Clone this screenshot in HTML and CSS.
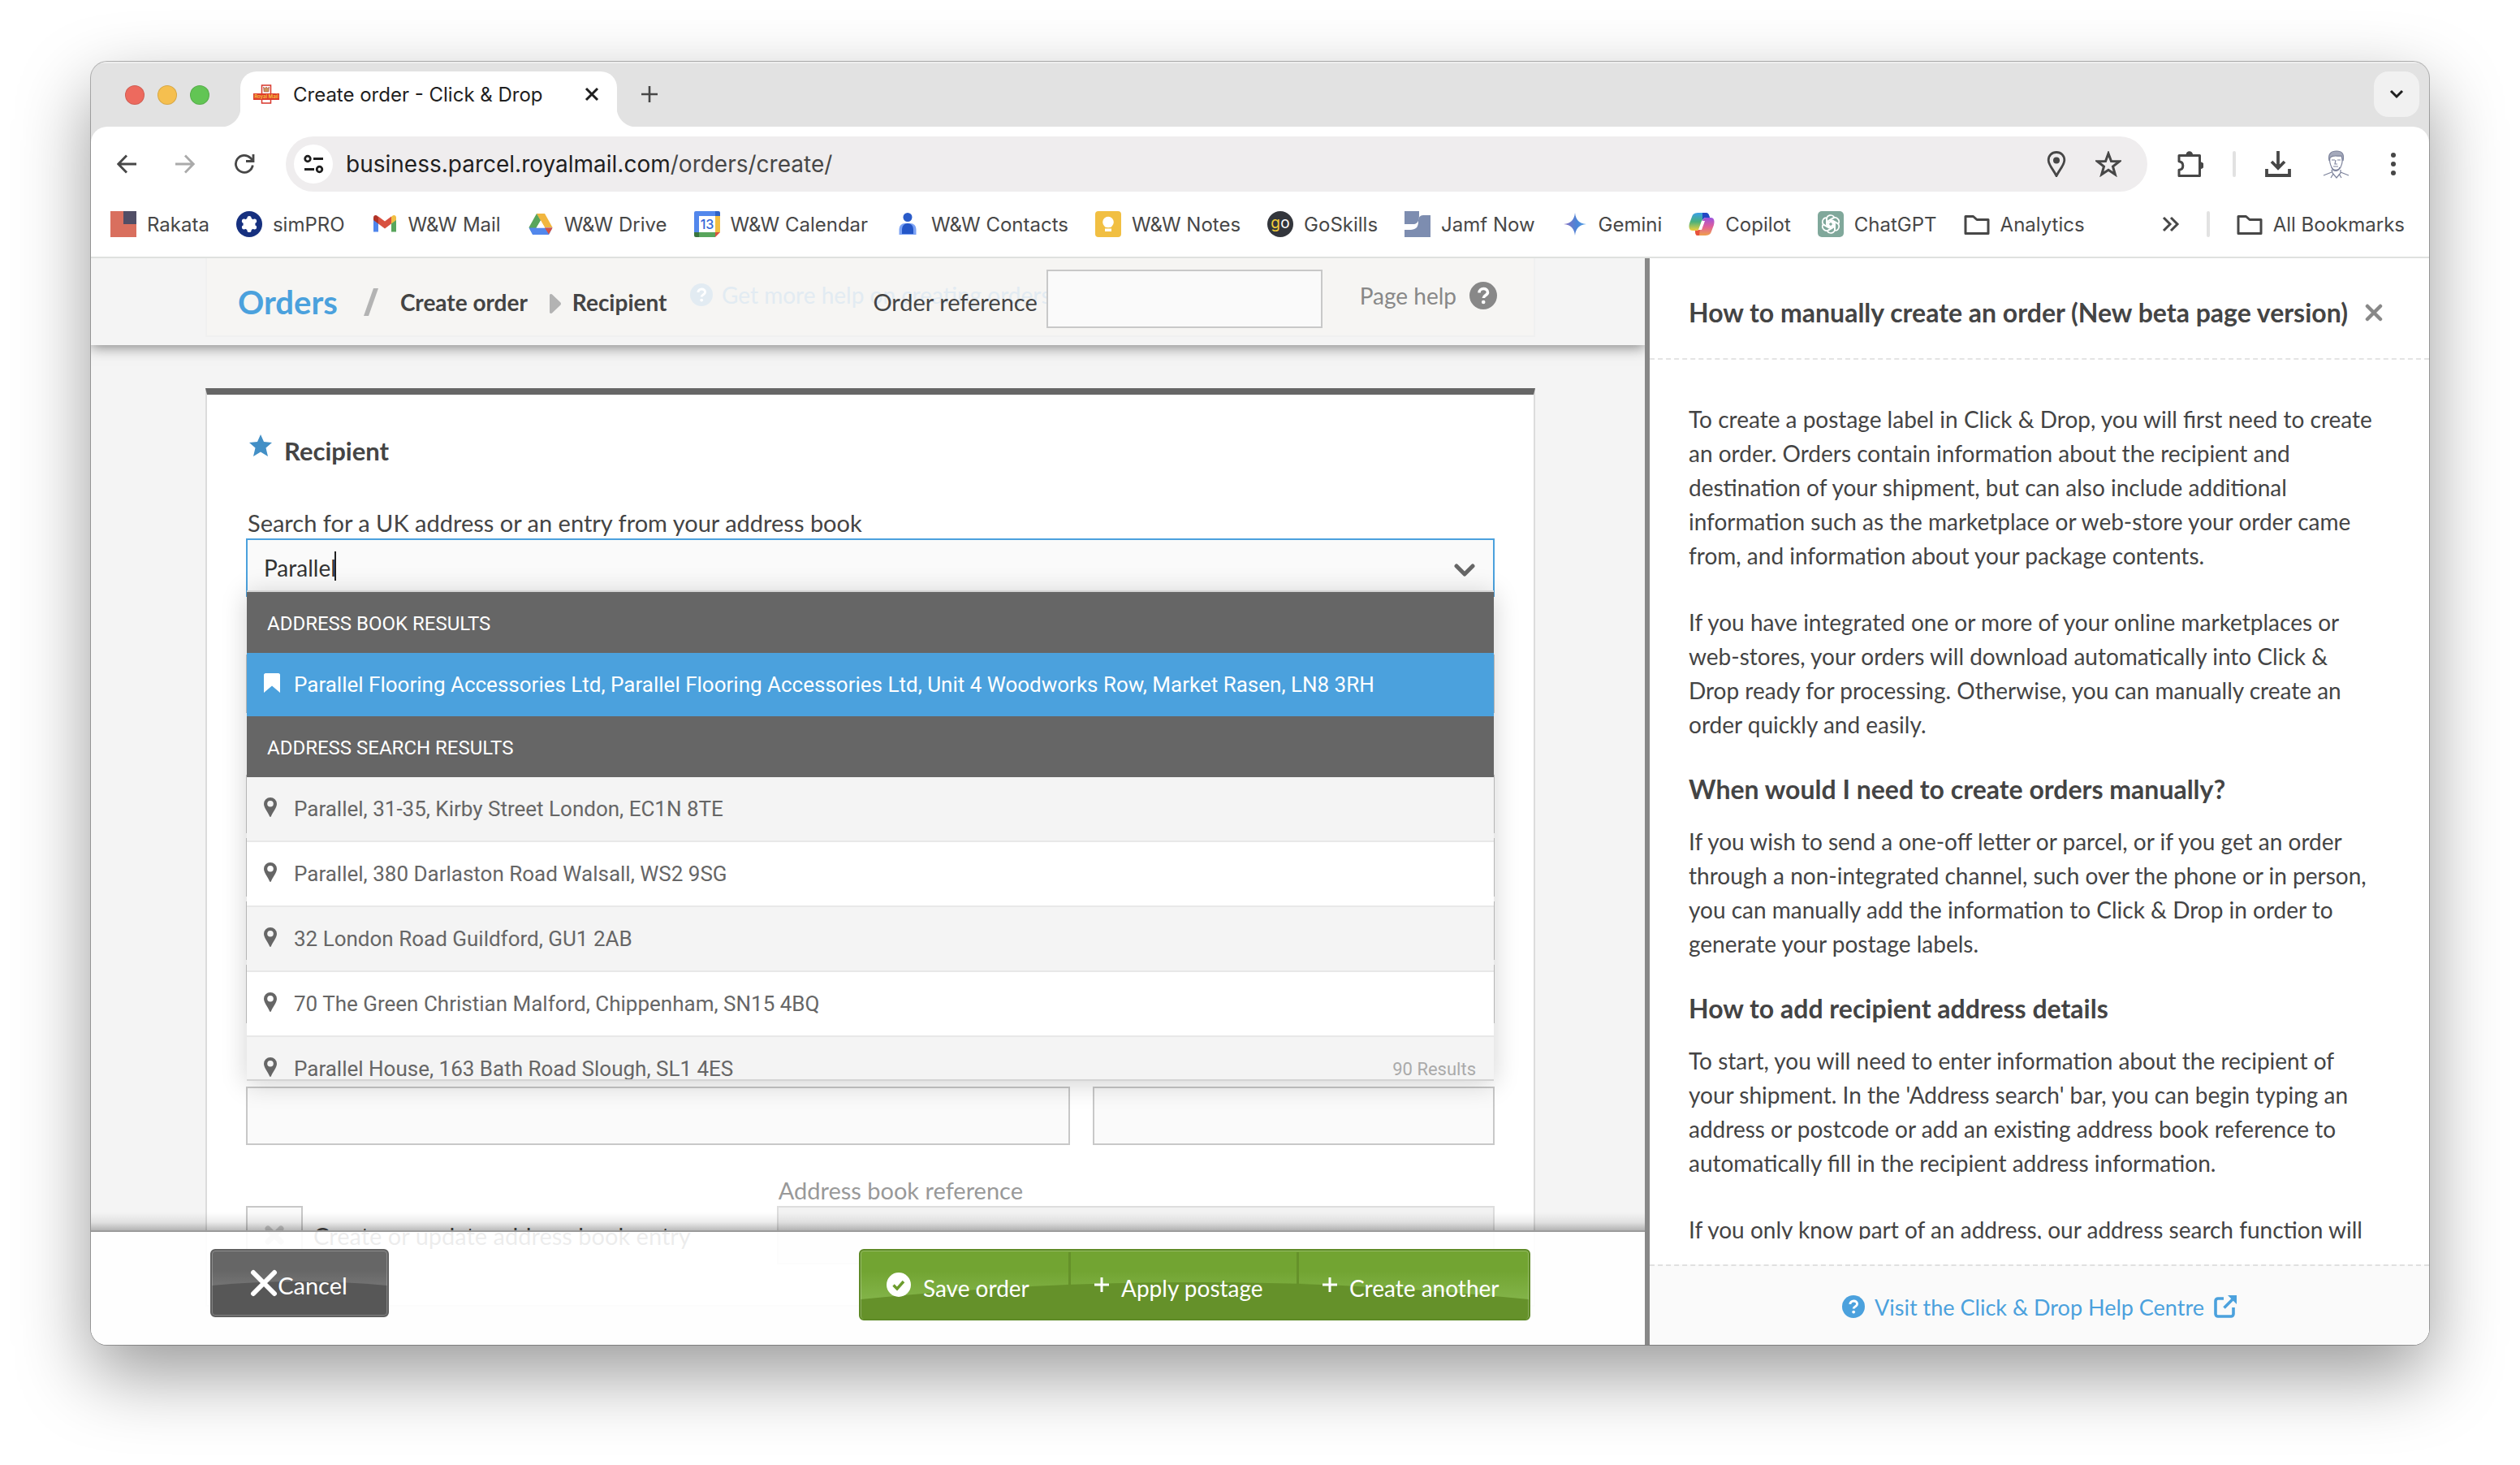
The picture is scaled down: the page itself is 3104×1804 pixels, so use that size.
FILE: index.html
```html
<!DOCTYPE html>
<html lang="en">
<head>
<meta charset="utf-8">
<meta name="viewport" content="width=device-width, initial-scale=1">
<title>Create order - Click &amp; Drop</title>
<link rel="stylesheet" href="styles.css">
</head>
<body>
<svg class="defs" aria-hidden="true">
  <defs>
    <symbol id="pin" viewBox="0 0 16 24" preserveAspectRatio="xMinYMid meet"><path fill-rule="evenodd" d="M8 0a8 8 0 0 1 8 8c0 4.500-5.500 11-7.200 15.400a.9.9 0 0 1-1.600 0C5.500 19 0 12.500 0 8a8 8 0 0 1 8-8zm0 4a3.800 3.800 0 1 0 0 7.600A3.800 3.800 0 0 0 8 4z"/></symbol>
    <symbol id="folder" viewBox="0 0 32 32"><path d="M2 6.500h9.500l4.500 4h14v17H2z" fill="none" stroke="#474747" stroke-width="3" stroke-linejoin="round"/></symbol>
    <symbol id="question" viewBox="0 0 34 34"><circle cx="17" cy="17" r="17"/><path d="M12 13.500c0-6.500 10.500-6.500 10.500-.5 0 3.800-5.200 3.800-5.200 7" fill="none" stroke="#fff" stroke-width="3.600"/><circle cx="17.200" cy="25" r="2.300" fill="#fff"/></symbol>
  </defs>
</svg>
<div class="window">
  <header class="tabstrip">
    <div class="lights"><span class="light red"></span><span class="light amber"></span><span class="light green"></span></div>
    <div class="tab">
      <svg class="i32" viewBox="0 0 32 32"><path d="M10.500 5h11v22h-11z" fill="#fff" stroke="#d8362b" stroke-width="1.500"/><path d="M12.500 7l2 2 1.500-2 1.500 2 2-2-.7 6h-5.600z" fill="#c9975c" stroke="#a8433a" stroke-width=".6"/><path d="M0 15h32v8H0z" fill="#dd3b2c"/><text x="16" y="21" text-anchor="middle" font-size="6" font-weight="600" fill="#f7c33f">Royal Mail</text></svg>
      <span class="tab-title">Create order - Click &amp; Drop</span>
      <button class="bare" aria-label="Close tab"><svg class="i18" viewBox="0 0 18 18"><path d="M2 2l14 14M16 2L2 16" stroke="#1f1f1f" stroke-width="3"/></svg></button>
    </div>
    <button class="bare newtab" aria-label="New tab"><svg class="i22" viewBox="0 0 22 22"><path d="M11 1v20M1 11h20" stroke="#474747" stroke-width="2.600"/></svg></button>
    <button class="tabmenu" aria-label="Search tabs"><svg class="i18" viewBox="0 0 18 18"><path d="M2 5l7 7 7-7" fill="none" stroke="#1f1f1f" stroke-width="3"/></svg></button>
  </header>

  <div class="chrome">
    <div class="urlrow">
      <div class="navs">
        <button class="bare" aria-label="Back"><svg class="i24" viewBox="0 0 24 24"><path d="M24 12H2M12 1.500L1.800 12 12 22.500" fill="none" stroke="#474747" stroke-width="2.800"/></svg></button>
        <button class="bare" aria-label="Forward"><svg class="i24" viewBox="0 0 24 24"><path d="M0 12h22M12 1.500L22.200 12 12 22.500" fill="none" stroke="#aaa" stroke-width="2.800"/></svg></button>
        <button class="bare" aria-label="Reload"><svg class="i26" viewBox="0 0 26 26"><path d="M23.300 14.500A10.500 10.500 0 1 1 20.500 5.500l3 3" fill="none" stroke="#474747" stroke-width="2.800"/><path d="M24 1v8.500h-9" fill="none" stroke="#474747" stroke-width="2.800"/></svg></button>
      </div>
      <div class="urlbar">
        <span class="tune"><svg class="i26" viewBox="0 0 26 26"><g fill="none" stroke="#1f1f1f" stroke-width="2.800"><circle cx="6" cy="6.500" r="3.300"/><path d="M13 6.500h12M2 19.500h12"/><circle cx="20.500" cy="19.500" r="3.300"/></g></svg></span>
        <span class="url">business.parcel.royalmail.com<span class="path">/orders/create/</span></span>
        <button class="bare" aria-label="Location"><svg class="i32" viewBox="0 0 32 32"><path d="M16 1.500c5.800 0 9.800 4.300 9.800 9.700C25.800 17 20 22.500 16 30.500 12 22.500 6.200 17 6.200 11.200c0-5.400 4-9.700 9.800-9.700z" fill="none" stroke="#474747" stroke-width="2.800"/><circle cx="16" cy="11.500" r="4" fill="#474747"/></svg></button>
        <button class="bare" aria-label="Bookmark this tab"><svg class="i32" viewBox="0 0 32 32"><path d="M16 3l3.500 9.500 10 .3-8 6.200 2.800 9.800L16 23.200l-8.300 5.600 2.800-9.800-8-6.200 10-.3z" fill="none" stroke="#474747" stroke-width="3"/></svg></button>
      </div>
      <div class="actions">
        <button class="bare" aria-label="Extensions"><svg class="i32" viewBox="0 0 32 32"><path d="M2 5.500h25.500v25H2v-7.200c2.800-.3 4.800-2.300 4.800-5.300S4.800 13 2 12.700z" fill="none" stroke="#474747" stroke-width="3" stroke-linejoin="round"/><path d="M10.500 4.500a4.300 4.300 0 0 1 8.600 0zM28.500 13.500a4.300 4.300 0 0 1 0 8.600z" fill="#474747"/></svg></button>
        <span class="vline"></span>
        <button class="bare" aria-label="Downloads"><svg class="i32" viewBox="0 0 32 32"><path d="M16 0v20M8 13l8 8 8-8M2 22v8h28v-8" fill="none" stroke="#474747" stroke-width="3.800"/></svg></button>
        <button class="bare profile" aria-label="Profile"><svg class="i36" viewBox="0 0 36 36"><g fill="none" stroke="#7c829b" stroke-width="1.200"><path d="M10 14c-2-9 3-12 9-12s10 3 8 12" fill="#a4a9bb"/><path d="M11 10c5-4 9-1 14-2 2 5 1 10-1 14-2 4-9 5-11 0-2-4-3-8-2-12z" fill="#fff"/><path d="M13 13h4M20 13h4M18 13l-1 5h3M15 21h6M13 22c2 6 8 6 10 0M13 25l1 4 5 6 5-6v-4M13 28L3 32M24 28l10 4M15 30l-3 5M22 30l3 5"/></g></svg></button>
        <button class="bare" aria-label="Menu"><svg class="i32" viewBox="0 0 32 32" fill="#474747"><circle cx="16" cy="5" r="3"/><circle cx="16" cy="16" r="3"/><circle cx="16" cy="27" r="3"/></svg></button>
      </div>
    </div>
    <nav class="bookmarks" aria-label="Bookmarks">
      <a href="#"><svg class="i32" viewBox="0 0 32 32"><path d="M0 0h32v32H0z" fill="#d96f5e"/><path d="M16 0h16v16H16z" fill="#514e66"/></svg>Rakata</a>
      <a href="#"><svg class="i32" viewBox="0 0 32 32"><circle cx="16" cy="16" r="16" fill="#16307f"/><g fill="#fff"><circle cx="16" cy="16" r="7.500"/><circle cx="16" cy="8.500" r="2.600"/><circle cx="22.500" cy="12.200" r="2.600"/><circle cx="22.500" cy="19.800" r="2.600"/><circle cx="16" cy="23.500" r="2.600"/><circle cx="9.500" cy="19.800" r="2.600"/><circle cx="9.500" cy="12.200" r="2.600"/></g></svg>simPRO</a>
      <a href="#"><svg class="i32" viewBox="0 0 32 32"><path d="M2 8v17.500h6V13z" fill="#4f86ec"/><path d="M24 13v12.500h6V8z" fill="#58a55c"/><path d="M24 7v8.500L30 11V8c0-3-3-4-5-2z" fill="#f1be42"/><path d="M8 6.500l8 6 8-6v9l-8 6-8-6z" fill="#d85140"/><path d="M2 8v3l6 4.500V7L7 6C5 4 2 5 2 8z" fill="#b03226"/></svg>W&amp;W Mail</a>
      <a href="#"><svg class="i32" viewBox="0 0 32 32"><path d="M11 3h10l-5 8.500z" fill="#3d7f45"/><path d="M11 3L1.500 20 6 28l10-16.500z" fill="#58a55c"/><path d="M21 3h-10l10 17h9.500z" fill="#f1b63f"/><path d="M1.500 20.500h29L26 29H6z" fill="#5287ec"/><path d="M21 20.500h9.500L26 28.500z" fill="#d85140"/><path d="M16 11.500l5 9H11z" fill="#fff"/></svg>W&amp;W Drive</a>
      <a href="#"><svg class="i32" viewBox="0 0 32 32"><path d="M2 0h24v6H6v20H0V2a2 2 0 0 1 2-2z" fill="#5287ec"/><path d="M26 0h4a2 2 0 0 1 2 2v4h-6z" fill="#2f63c4"/><path d="M26 6h6v20h-6z" fill="#f1be42"/><path d="M6 26h20v6H6z" fill="#58a55c"/><path d="M0 26h6v6H2a2 2 0 0 1-2-2z" fill="#39753f"/><path d="M26 26h6l-6 6z" fill="#d85140"/><path d="M6 6h20v20H6z" fill="#fff"/><text x="16" y="22" text-anchor="middle" font-size="16" font-weight="500" fill="#3367d6">13</text></svg>W&amp;W Calendar</a>
      <a href="#"><svg class="i32" viewBox="0 0 32 32"><circle cx="16" cy="7.500" r="5.500" fill="#2a5bc9"/><path d="M5.500 29v-7a7 7 0 0 1 7-7h7a7 7 0 0 1 7 7v7z" fill="#7ba2f5"/><path d="M9 28v-6a7 7 0 0 1 14 0v6z" fill="#2456c8"/></svg>W&amp;W Contacts</a>
      <a href="#"><svg class="i32" viewBox="0 0 32 32"><rect width="32" height="32" rx="4" fill="#f1bf42"/><circle cx="16" cy="13.500" r="6.800" fill="#fff"/><path d="M12 17h8v2.500h-8zM12 21.500h8V25h-8z" fill="#fff"/></svg>W&amp;W Notes</a>
      <a href="#"><svg class="i32" viewBox="0 0 32 32"><circle cx="16" cy="16" r="16" fill="#33363c"/><text x="10" y="21" text-anchor="middle" font-size="19" fill="#f3cf3a">g</text><text x="22" y="21" text-anchor="middle" font-size="19" fill="#fff">o</text></svg>GoSkills</a>
      <a href="#"><svg class="i32" viewBox="0 0 32 32" fill="#7d8db0"><path d="M0 0h18v5c0 5-1 10-6 11H0z"/><path d="M32 5v27H0v-9h8c8-1 9-5 9-11 0-4 2-7 6-7z"/></svg>Jamf Now</a>
      <a href="#"><svg class="i32" viewBox="0 0 32 32"><defs><linearGradient id="gem" x1="0" x2="1"><stop stop-color="#8a6fc0"/><stop offset=".6" stop-color="#4a86d8"/><stop offset="1" stop-color="#5aa5e8"/></linearGradient></defs><path d="M16 2c1 9 5 13 14 14-9 1-13 5-14 14-1-9-5-13-14-14 9-1 13-5 14-14z" fill="url(#gem)"/></svg>Gemini</a>
      <a href="#"><svg class="i32" viewBox="0 0 32 32"><defs><linearGradient id="cp1" x1="0" x2="0" y1="0" y2="1"><stop stop-color="#3aa0e8"/><stop offset=".5" stop-color="#48b07c"/><stop offset="1" stop-color="#f0d03c"/></linearGradient><linearGradient id="cp2" x1="0" x2="0" y1="0" y2="1"><stop stop-color="#9a52e0"/><stop offset=".5" stop-color="#e0609a"/><stop offset="1" stop-color="#f0a04a"/></linearGradient></defs><path d="M13 2h8c3 0 4 2 5 6h-5c-3 0-4 2-5 5l-2 7c-1 3-2 4-5 4H5c-5 0-5-5-4-9l3-8c1-4 4-5 9-5z" fill="url(#cp1)"/><path d="M19 30h-8c-2 0-3-2-3-6 3 0 5 0 6-4l3-8c1-3 2-4 5-4h5c5 0 5 5 4 9l-3 8c-1 4-4 5-9 5z" fill="url(#cp2)"/><path d="M17 2h4c3 0 4 2 5 6h-5c-2 0-3 1-4 3z" fill="#2348c4"/><path d="M8 24c3 0 5 0 6-3l-1 9h-2c-2 0-3-2-3-6z" fill="#e8523c"/><path d="M16 12h4l-4 11h-4z" fill="#fff"/></svg>Copilot</a>
      <a href="#"><svg class="i32" viewBox="0 0 32 32"><rect width="32" height="32" rx="5" fill="#80a89b"/><g fill="none" stroke="#fff" stroke-width="1.700"><path id="petal" d="M11 17.500V9.800a5 5 0 0 1 9.300-2.300M13.500 19l-2.500-1.500M20 8L13.500 11.800V19"/><use href="#petal" transform="rotate(60 16 16)"/><use href="#petal" transform="rotate(120 16 16)"/><use href="#petal" transform="rotate(180 16 16)"/><use href="#petal" transform="rotate(240 16 16)"/><use href="#petal" transform="rotate(300 16 16)"/></g></svg>ChatGPT</a>
      <a href="#"><svg class="i32"><use href="#folder"/></svg>Analytics</a>
      <div class="more">
        <button class="bare" aria-label="More bookmarks"><svg class="i22" viewBox="0 0 22 22"><path d="M2 3l8 8-8 8M11 3l8 8-8 8" fill="none" stroke="#474747" stroke-width="3"/></svg></button>
        <span class="vline"></span>
        <a href="#"><svg class="i32"><use href="#folder"/></svg>All Bookmarks</a>
      </div>
    </nav>
  </div>

  <div class="page">
    <main class="main">
      <div class="pagehead">
        <div class="headbox">
          <span class="ghost"><svg class="i28"><use href="#question"/></svg>Get more help on creating orders</span>
          <nav class="crumbs" aria-label="Breadcrumb">
            <a class="orders" href="#">Orders</a>
            <svg class="slash" viewBox="0 0 18 34"><path d="M12 0h6L6 34H0z" fill="#b3b3b3"/></svg>
            <span>Create order</span>
            <svg class="tri" viewBox="0 0 14 24"><path d="M0 1.500c0-1.500 2-2 3-1l10 9.500q2 2 0 4L3 23.500c-1 1-3 .5-3-1z" fill="#b3b3b3"/></svg>
            <span>Recipient</span>
          </nav>
          <div class="reference"><label for="ref">Order reference</label><input class="field" id="ref" type="text"></div>
          <a class="pagehelp" href="#">Page help <svg class="i34"><use href="#question"/></svg></a>
        </div>
      </div>

      <div class="scroll">
        <form class="card">
          <h2 class="cardtitle"><svg class="i28" viewBox="0 0 28 28"><path d="M14 1l4 9 10 1-7.500 6.500L23 28l-9-5.500L5 28l2.500-10.500L0 11l10-1z" fill="#428fc6"/></svg>Recipient</h2>
          <label class="label" for="search">Search for a UK address or an entry from your address book</label>
          <div class="combo">
            <input class="field active" id="search" type="text" value="Parallel" autocomplete="off">
            <span class="caret"></span>
            <svg class="chev" viewBox="0 0 26 16"><path d="M3 3l10 10L23 3" fill="none" stroke="#666" stroke-width="5" stroke-linecap="round" stroke-linejoin="round"/></svg>
            <div class="results">
              <div class="group">ADDRESS BOOK RESULTS</div>
              <div class="result selected"><svg class="mark" viewBox="0 0 20 24"><path d="M0 2c0-1 1-2 2-2h16c1 0 2 1 2 2v22l-10-8.500L0 24z" fill="#fff"/></svg>Parallel Flooring Accessories Ltd, Parallel Flooring Accessories Ltd, Unit 4 Woodworks Row, Market Rasen, LN8 3RH</div>
              <div class="group">ADDRESS SEARCH RESULTS</div>
              <div class="result"><svg class="mark"><use href="#pin"/></svg>Parallel, 31-35, Kirby Street London, EC1N 8TE</div>
              <div class="result"><svg class="mark"><use href="#pin"/></svg>Parallel, 380 Darlaston Road Walsall, WS2 9SG</div>
              <div class="result"><svg class="mark"><use href="#pin"/></svg>32 London Road Guildford, GU1 2AB</div>
              <div class="result"><svg class="mark"><use href="#pin"/></svg>70 The Green Christian Malford, Chippenham, SN15 4BQ</div>
              <div class="result"><svg class="mark"><use href="#pin"/></svg>Parallel House, 163 Bath Road Slough, SL1 4ES</div>
              <span class="count">90 Results</span>
            </div>
          </div>
          <input class="field name" type="text" aria-label="Name">
          <div class="lines">
            <input class="field" type="text" aria-label="Company">
            <input class="field" type="text" aria-label="Address line 1">
            <input class="field" type="text" aria-label="Address line 2">
            <input class="field" type="text" aria-label="Address line 3">
          </div>
          <div class="town"><input class="field" type="text" aria-label="Town"><input class="field" type="text" aria-label="Postcode"></div>
          <div class="book">
            <label class="check"><span class="box"><input type="checkbox"><svg class="i24" viewBox="0 0 24 24"><path d="M4 4l16 16M20 4L4 20" stroke="#ccc" stroke-width="7" stroke-linecap="round"/></svg></span>Create or update address book entry</label>
            <div><label class="label off" for="bookref">Address book reference</label><input class="field" id="bookref" type="text" disabled></div>
          </div>
        </form>
        <div class="actionsbar">
          <button class="cancel"><svg class="gloss" viewBox="0 0 216 80" preserveAspectRatio="none"><path d="M0 43Q108 33 216 43V80H0z" fill="#575757"/></svg><svg class="i34" viewBox="0 0 34 34"><path d="M4 4l26 26M30 4L4 30" stroke="#fff" stroke-width="6" stroke-linecap="round"/></svg><span>Cancel</span></button>
          <div class="save">
            <svg class="gloss" viewBox="0 0 822 84" preserveAspectRatio="none"><path d="M0 60Q411 18 822 60V84H0z" fill="#65912a"/></svg>
            <button><svg class="i30" viewBox="0 0 30 30"><circle cx="15" cy="15" r="15" fill="#fff"/><path d="M8.500 15.500l4.500 4.500 8-9" fill="none" stroke="#6c9c2e" stroke-width="3.400"/></svg><span>Save order</span></button>
            <button><svg class="i18" viewBox="0 0 18 18"><path d="M9 0v18M0 9h18" stroke="#fff" stroke-width="3"/></svg><span>Apply postage</span></button>
            <button><svg class="i18" viewBox="0 0 18 18"><path d="M9 0v18M0 9h18" stroke="#fff" stroke-width="3"/></svg><span>Create another</span></button>
          </div>
        </div>
      </div>
    </main>

    <aside class="help">
      <div class="helphead"><h2>How to manually create an order (New beta page version)</h2><button class="bare" aria-label="Close help"><svg class="i22" viewBox="0 0 22 22"><path d="M3 3l16 16M19 3L3 19" stroke="#888" stroke-width="4.500" stroke-linecap="round"/></svg></button></div>
      <div class="helpbody">
        <p>To create a postage label in Click &amp; Drop, you will first need to create an order. Orders contain information about the recipient and destination of your shipment, but can also include additional information such as the marketplace or web-store your order came from, and information about your package contents.</p>
        <p>If you have integrated one or more of your online marketplaces or web-stores, your orders will download automatically into Click &amp; Drop ready for processing. Otherwise, you can manually create an order quickly and easily.</p>
        <h3>When would I need to create orders manually?</h3>
        <p>If you wish to send a one-off letter or parcel, or if you get an order through a non-integrated channel, such over the phone or in person, you can manually add the information to Click &amp; Drop in order to generate your postage labels.</p>
        <h3>How to add recipient address details</h3>
        <p>To start, you will need to enter information about the recipient of your shipment. In the 'Address search' bar, you can begin typing an address or postcode or add an existing address book reference to automatically fill in the recipient address information.</p>
        <p>If you only know part of an address, our address search function will</p>
      </div>
      <div class="helpfoot"><a href="#"><svg class="i28"><use href="#question"/></svg>Visit the Click &amp; Drop Help Centre<svg class="i28" viewBox="0 0 28 28"><path d="M12 4H5a3 3 0 0 0-3 3v16a3 3 0 0 0 3 3h16a3 3 0 0 0 3-3v-8M12.500 15.500L23 5" fill="none" stroke="#4ba1dd" stroke-width="3.600"/><path d="M17 0h11v11z" fill="#4ba1dd"/></svg></a></div>
    </aside>
  </div>
</div>
</body>
</html>
```
FILE: styles.css
```css
* { box-sizing: border-box; }
body {
  margin: 0;
  height: 100vh;
  padding: 76px 112px 148px;
  background: #fff;
  color: #444;
  font-family: Lato, "Open Sans", sans-serif;
  font-size: 28px;
  overflow: hidden;
}
svg { display: block; flex: none; }
a { color: inherit; text-decoration: none; }
button, input { font: inherit; color: inherit; }
.defs { position: absolute; width: 0; height: 0; }
.i18 { width: 18px; height: 18px; }
.i22 { width: 22px; height: 22px; }
.i24 { width: 24px; height: 24px; }
.i26 { width: 26px; height: 26px; }
.i28 { width: 28px; height: 28px; }
.i30 { width: 30px; height: 30px; }
.i32 { width: 32px; height: 32px; }
.i34 { width: 34px; height: 34px; }
.i36 { width: 36px; height: 36px; }
.bare { display: block; border: 0; padding: 0; background: none; }

.window {
  height: 100%;
  display: flex;
  flex-direction: column;
  border-radius: 20px;
  overflow: hidden;
  background: #e2e2e2;
  box-shadow: 0 0 0 1px rgba(0, 0, 0, .28), 0 36px 90px rgba(0, 0, 0, .4);
}

/* Tab strip */
.tabstrip {
  height: 80px;
  display: flex;
  align-items: flex-end;
  padding: 0 12px 0 42px;
  box-shadow: inset 0 2px 0 #eee;
  font-family: Inter, sans-serif;
  font-size: 24px;
  color: #1f1f1f;
}
.lights { display: flex; gap: 16px; height: 68px; align-items: center; padding-bottom: 10px; }
.light { width: 24px; height: 24px; border-radius: 50%; border: 1px solid rgba(0, 0, 0, .12); }
.red { background: #ed6a5e; }
.amber { background: #f5bf4f; }
.green { background: #62c554; }
.tab {
  position: relative;
  width: 464px;
  height: 68px;
  margin-left: 38px;
  padding: 0 22px 12px 16px;
  display: flex;
  align-items: center;
  gap: 17px;
  background: #fff;
  border-radius: 20px 20px 0 0;
}
.tab::before, .tab::after { content: ""; position: absolute; bottom: 0; width: 24px; height: 24px; }
.tab::before { right: 100%; background: radial-gradient(circle at 0 0, transparent 24px, #fff 25px); }
.tab::after { left: 100%; background: radial-gradient(circle at 100% 0, transparent 24px, #fff 25px); }
.tab-title { flex: 1; white-space: nowrap; }
.newtab { margin: 0 auto 29px 29px; }
.tabmenu {
  width: 56px;
  height: 56px;
  margin-bottom: 12px;
  border: 0;
  border-radius: 18px;
  background: #f1f1f1;
  display: grid;
  place-items: center;
}

/* Address bar and bookmarks */
.chrome {
  background: #fff;
  border-radius: 20px 20px 0 0;
  border-bottom: 2px solid #dfe1df;
  padding-top: 12px;
  font-family: Inter, sans-serif;
  color: #474747;
}
.urlrow { height: 68px; display: flex; align-items: center; padding: 0 28px 0 32px; }
.navs { display: flex; align-items: center; gap: 48px; width: 208px; }
.urlbar {
  flex: 1;
  height: 68px;
  border-radius: 34px;
  background: #efedee;
  display: flex;
  align-items: center;
  gap: 32px;
  padding: 0 32px 0 10px;
}
.tune { width: 48px; height: 48px; border-radius: 50%; background: #fff; display: grid; place-items: center; }
.url { flex: 1; margin-left: -16px; color: #1f1f1f; }
.path { color: #474747; }
.actions { display: flex; align-items: center; gap: 36px; padding-left: 37px; }
.profile { margin: 0 1px; }
.vline { width: 4px; height: 32px; border-radius: 2px; background: #e2e2e2; }
.bookmarks { height: 80px; display: flex; align-items: center; gap: 33px; padding: 0 30px 0 24px; font-size: 24px; }
.bookmarks a { display: flex; align-items: center; gap: 13px; white-space: nowrap; }
.more { margin-left: auto; display: flex; align-items: center; gap: 33px; }

/* Page */
.page { flex: 1; min-height: 0; display: flex; background: #f4f4f4; }
.main { flex: 1; min-width: 0; display: flex; flex-direction: column; }
.pagehead {
  position: relative;
  z-index: 2;
  height: 107px;
  padding: 0 135px 10px 141px;
  background: #f4f4f4;
  box-shadow: 0 2px 16px rgba(0, 0, 0, .5);
  clip-path: inset(0 0 -30px 0);
}
.headbox {
  position: relative;
  height: 97px;
  display: flex;
  align-items: center;
  padding: 4px 45px 0 38px;
  background: #f6f5f3;
  border: solid #f0f0f0;
  border-width: 0 2px 2px;
}
.ghost { position: absolute; left: 595px; top: 28px; display: flex; align-items: center; gap: 11px; color: #e2ebf2; fill: #e2ebf2; }
.crumbs { display: flex; align-items: center; font-size: 28px; font-weight: 700; padding-top: 8px; }
.orders { font-size: 40px; color: #4ba1dd; }
.slash { width: 18px; height: 34px; margin: 0 27px 0 32px; }
.tri { width: 14px; height: 24px; margin: 4px 14px 0 27px; }
.reference { position: relative; margin-left: auto; display: flex; align-items: center; gap: 11px; font-size: 29px; }
.reference label { padding-top: 8px; }
.reference .field { width: 340px; }
.pagehelp { display: flex; align-items: center; gap: 16px; margin-left: 46px; padding-bottom: 8px; color: #888; fill: #888; }

.scroll { position: relative; flex: 1; min-height: 0; overflow: hidden; padding: 53px 135px 0 141px; }
.card {
  background: #fff;
  border: 2px solid #dcdcdc;
  border-top: 8px solid #666;
  padding: 48px 48px 50px;
}
.cardtitle { margin: 0 0 50px 4px; display: flex; gap: 15px; height: 42px; line-height: 42px; font-size: 31px; font-weight: 700; }
.label { display: block; height: 37px; line-height: 36px; margin-left: 2px; font-size: 29px; }
.off { color: #999; }
.field {
  display: block;
  width: 100%;
  height: 72px;
  border: 2px solid #c8c8c8;
  border-radius: 0;
  background: #fafafa;
  padding: 0 20px;
  outline: 0;
}
.field:disabled { background: #f2f2f2; border-color: #ddd; }
.active { border-color: #4ba1dd; color: #333; }
.combo { position: relative; }
.caret { position: absolute; left: 109px; top: 16px; width: 2px; height: 36px; background: #222; }
.chev { position: absolute; right: 24px; top: 31px; width: 26px; height: 16px; }
.results {
  position: absolute;
  z-index: 1;
  top: 64px;
  left: 1px;
  right: 1px;
  height: 604px;
  overflow: hidden;
  background: #f4f4f4;
  border: solid #d4d4d4;
  border-width: 2px 0;
  box-shadow: 0 4px 30px rgba(0, 0, 0, .18);
  font-family: Roboto, sans-serif;
  font-size: 26px;
  color: #666;
  fill: #666;
}
.group { height: 75px; line-height: 79px; padding-left: 25px; background: #666; color: #fff; font-size: 24px; }
.result { height: 80px; display: flex; align-items: center; gap: 17px; padding: 0 21px; border-bottom: 2px solid #e8e8e8; white-space: nowrap; }
.result:nth-child(odd) { background: #fff; }
.result.selected { height: 78px; background: #4ba1dd; color: #fff; border: 0; }
.mark { width: 20px; height: 24px; margin-bottom: 4px; }
.count { position: absolute; right: 22px; bottom: 0; font-size: 22px; color: #aaa; }
.name { margin-top: 71px; }
.lines { margin-top: 76px; display: grid; gap: 6px; }
.town { margin-top: 78px; display: grid; grid-template-columns: 66% 1fr; gap: 28px; }
.book { margin-top: 38px; display: grid; grid-template-columns: 42.5% 1fr; }
.check { display: flex; align-items: center; gap: 13px; padding-top: 37px; font-size: 29px; }
.box { display: grid; place-items: center; }
.box > * { grid-area: 1 / 1; }
.box input { appearance: none; margin: 0; width: 70px; height: 72px; border: 2px solid #c8c8c8; background: #fafafa; }
.box svg { z-index: 1; }

.actionsbar {
  position: absolute;
  z-index: 2;
  left: 0;
  right: 0;
  bottom: 0;
  height: 141px;
  padding: 21px 141px 0 147px;
  display: flex;
  align-items: flex-start;
  justify-content: space-between;
  background: rgba(255, 255, 255, .9);
  border-top: 2px solid #d8d8d8;
  color: #fff;
}
.actionsbar::before {
  content: "";
  position: absolute;
  left: 0;
  right: 0;
  bottom: 100%;
  height: 24px;
  background: linear-gradient(transparent, rgba(0, 0, 0, .08) 50%, rgba(0, 0, 0, .3));
}
.actionsbar button { position: relative; border: 0; background: none; display: flex; align-items: center; white-space: nowrap; }
.gloss { position: absolute; left: 0; top: 0; width: 100%; height: 100%; }
.cancel, .save { overflow: hidden; border-radius: 6px; }
.actionsbar .cancel {
  width: 220px;
  height: 84px;
  justify-content: center;
  padding: 0 2px 0 0;
  border: 2px solid #606060;
  background: linear-gradient(#666 30%, #747474 55%);
  font-size: 29px;
}
.cancel::after, .save::after { content: ""; position: absolute; inset: 0; border: 1px solid rgba(255, 255, 255, .25); border-radius: 4px; pointer-events: none; }
.save::after { border-bottom: 0; }
.cancel svg, .cancel span { position: relative; }
.cancel .gloss { position: absolute; }
.cancel span { padding-top: 5px; }
.save {
  position: relative;
  width: 827px;
  height: 88px;
  display: grid;
  grid-template-columns: 256px 281px 1fr;
  border: 2px solid #5e8a26;
  background: linear-gradient(#72a432 30%, #82b348 70%);
}
.save button { gap: 15px; padding: 0 0 0 32px; }
.save button + button::before { content: ""; position: absolute; left: 0; top: 2px; width: 3px; height: 40px; background: #65912a; }
.save span { padding-top: 7px; }

/* Help panel */
.help {
  width: 966px;
  flex: none;
  display: flex;
  flex-direction: column;
  background: #fff;
  border-left: 6px solid #888;
  position: relative;
  z-index: 3;
}
.helphead { height: 125px; display: flex; align-items: center; justify-content: space-between; padding: 10px 57px 0 48px; border-bottom: 2px dashed #e4e4e4; white-space: nowrap; }
.helphead h2, .helpbody h3 { margin: 0; font-size: 32px; font-weight: 700; line-height: 42px; }
.helpbody { flex: 1; min-height: 0; overflow: hidden; margin-bottom: 31px; padding: 52px 61px 0 48px; line-height: 42px; }
.helpbody p { margin: 0 0 40px; }
.helpbody h3 { margin: -2px 0 22px; }
.helpfoot { height: 99px; display: flex; align-items: center; justify-content: center; padding-top: 3px; background: #fafafa; border-top: 2px dashed #e0e0e0; }
.helpfoot a { display: flex; align-items: center; gap: 12px; font-size: 27px; color: #4ba1dd; fill: #4ba1dd; }
```
